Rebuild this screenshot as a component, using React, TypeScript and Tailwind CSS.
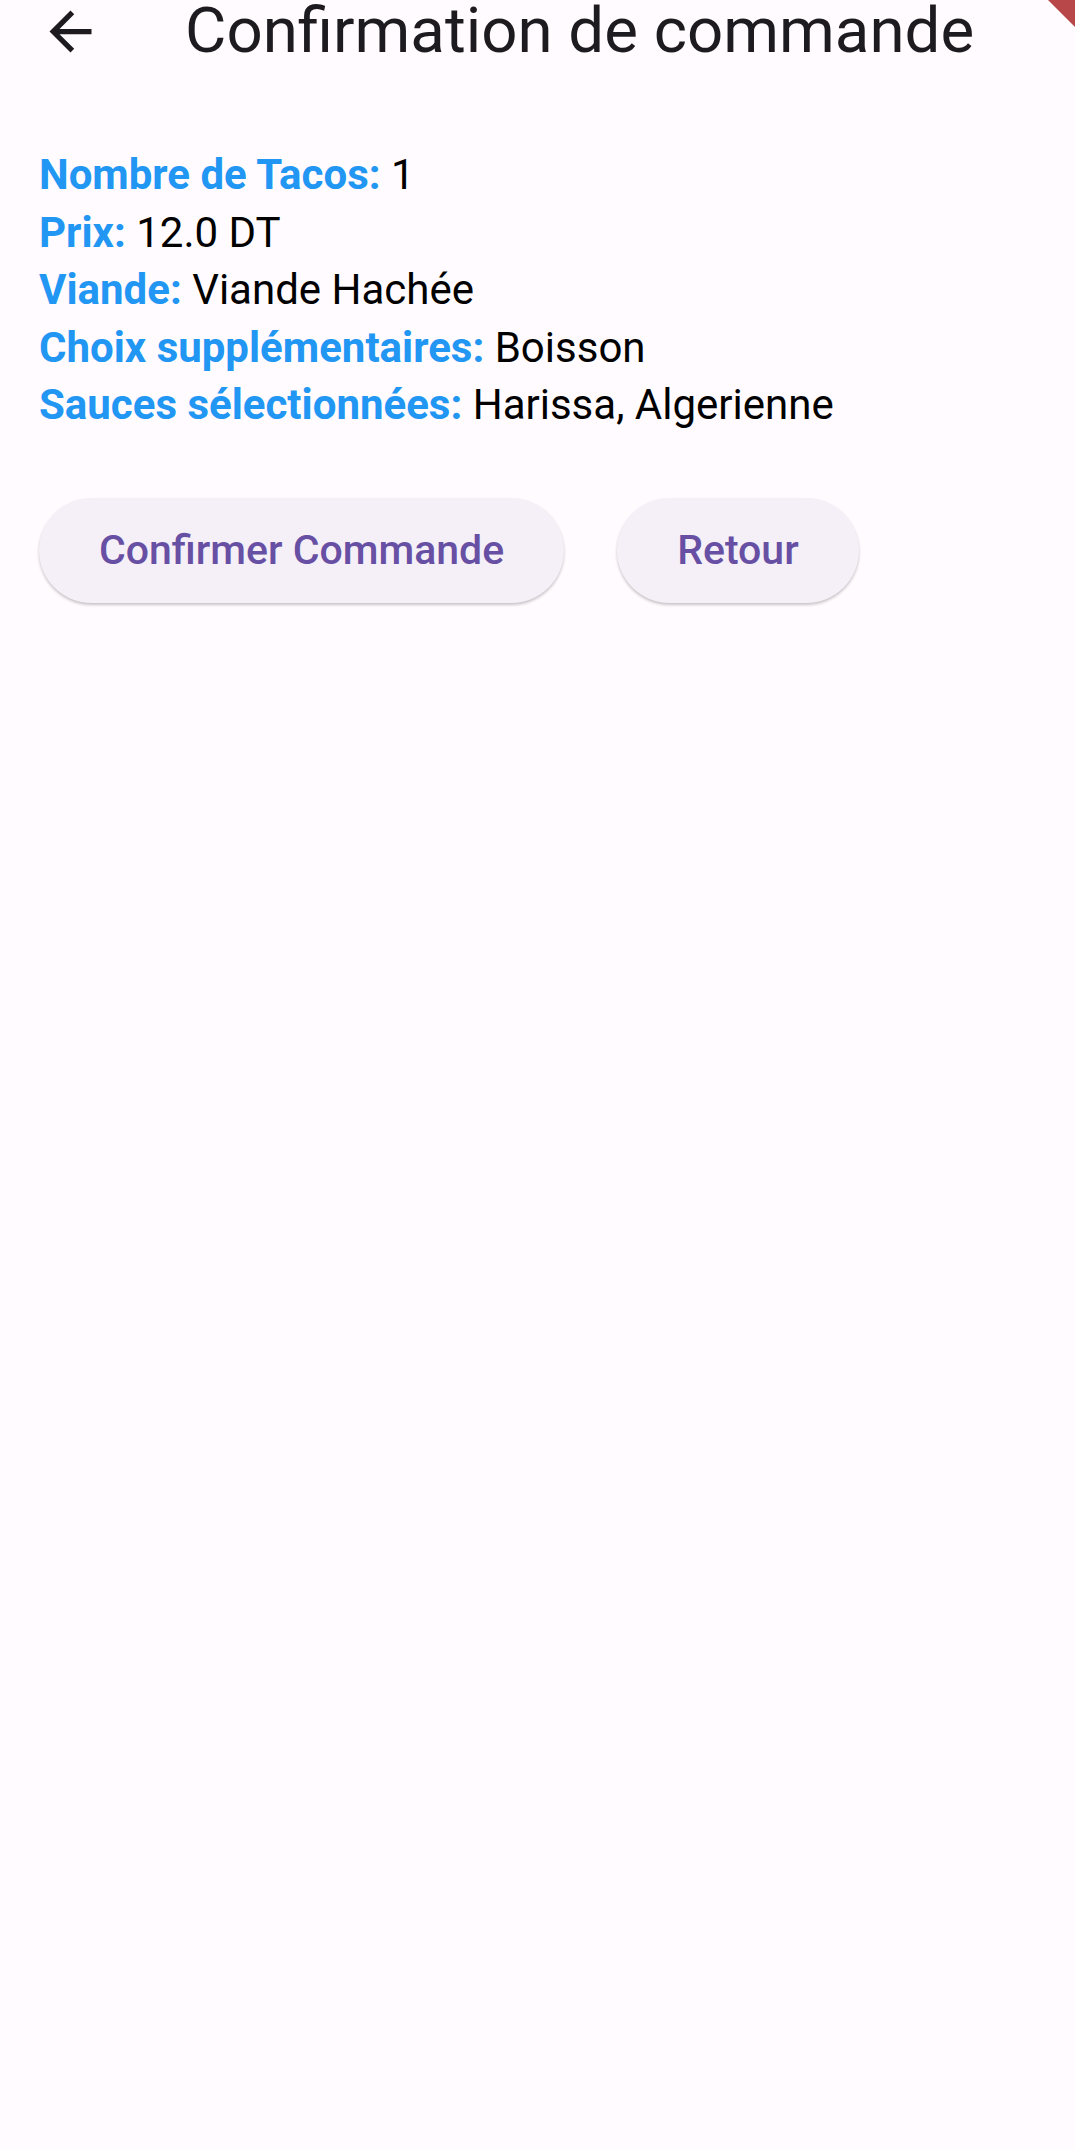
const details = [
  { label: "Nombre de Tacos:", value: "1" },
  { label: "Prix:", value: "12.0 DT" },
  { label: "Viande:", value: "Viande Hachée" },
  { label: "Choix supplémentaires:", value: "Boisson" },
  { label: "Sauces sélectionnées:", value: "Harissa, Algerienne" },
];

function BackIcon() {
  // material arrow_back
  return (
    <svg width="63" height="63" viewBox="0 0 24 24" fill="#1d1b20">
      <path d="M20 11H7.83l5.59-5.59L12 4l-8 8 8 8 1.41-1.41L7.83 13H20v-2z" />
    </svg>
  );
}

export default function App() {
  return (
    <div
      className="relative min-h-[2150px] w-full overflow-hidden bg-[#fffbfe] text-black"
      style={{ fontFamily: "Roboto, 'Noto Sans', sans-serif" }}
    >
      {/* debug banner corner */}
      <svg className="absolute right-0 top-0" width="30" height="30" viewBox="0 0 30 30">
        <polygon points="3,0 30,0 30,27" fill="#b8474a" />
      </svg>

      <header className="flex h-[62px] items-center">
        <button className="ml-[39px] flex h-[63px] w-[63px] items-center justify-center">
          <BackIcon />
        </button>
        <h1 className="ml-[83px] text-[63.6px] leading-[62px] text-[#1d1b20]">
          Confirmation de commande
        </h1>
      </header>

      <div className="pl-[39px] pt-[84px]">
        <div className="text-[42px] leading-[57.6px]">
          {details.map((d) => (
            <p key={d.label}>
              <span className="font-bold text-[#2196f3]">{d.label}</span> {d.value}
            </p>
          ))}
        </div>

        <div className="mt-[64px] flex gap-[53px]">
          <button className="h-[105px] rounded-full bg-[#f5eff7] px-[60px] text-[41px] font-medium text-[#6750a4] shadow-[0_2px_3px_rgba(0,0,0,0.22)]">
            Confirmer Commande
          </button>
          <button className="h-[105px] rounded-full bg-[#f5eff7] px-[60px] text-[41px] font-medium text-[#6750a4] shadow-[0_2px_3px_rgba(0,0,0,0.22)]">
            Retour
          </button>
        </div>
      </div>
    </div>
  );
}
